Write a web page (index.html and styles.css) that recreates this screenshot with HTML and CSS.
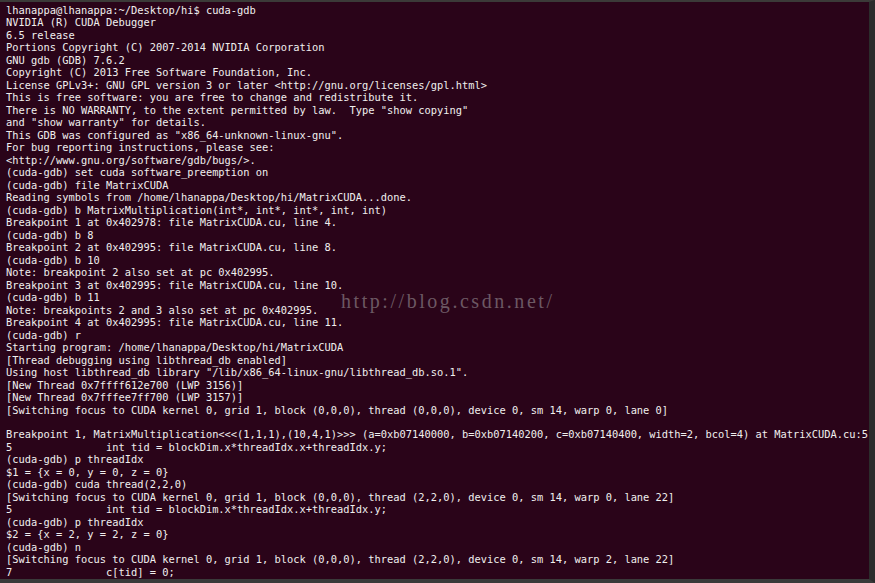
FILE: index.html
```html
<!DOCTYPE html>
<html>
<head>
<meta charset="utf-8">
<link rel="stylesheet" href="styles.css">
</head>
<body>
<div class="term">
<pre class="out">lhanappa@lhanappa:~/Desktop/hi$ cuda-gdb
NVIDIA (R) CUDA Debugger
6.5 release
Portions Copyright (C) 2007-2014 NVIDIA Corporation
GNU gdb (GDB) 7.6.2
Copyright (C) 2013 Free Software Foundation, Inc.
License GPLv3+: GNU GPL version 3 or later &lt;http://gnu.org/licenses/gpl.html&gt;
This is free software: you are free to change and redistribute it.
There is NO WARRANTY, to the extent permitted by law.  Type "show copying"
and "show warranty" for details.
This GDB was configured as "x86_64-unknown-linux-gnu".
For bug reporting instructions, please see:
&lt;http://www.gnu.org/software/gdb/bugs/&gt;.
(cuda-gdb) set cuda software_preemption on
(cuda-gdb) file MatrixCUDA
Reading symbols from /home/lhanappa/Desktop/hi/MatrixCUDA...done.
(cuda-gdb) b MatrixMultiplication(int*, int*, int*, int, int)
Breakpoint 1 at 0x402978: file MatrixCUDA.cu, line 4.
(cuda-gdb) b 8
Breakpoint 2 at 0x402995: file MatrixCUDA.cu, line 8.
(cuda-gdb) b 10
Note: breakpoint 2 also set at pc 0x402995.
Breakpoint 3 at 0x402995: file MatrixCUDA.cu, line 10.
(cuda-gdb) b 11
Note: breakpoints 2 and 3 also set at pc 0x402995.
Breakpoint 4 at 0x402995: file MatrixCUDA.cu, line 11.
(cuda-gdb) r
Starting program: /home/lhanappa/Desktop/hi/MatrixCUDA
[Thread debugging using libthread_db enabled]
Using host libthread_db library "/lib/x86_64-linux-gnu/libthread_db.so.1".
[New Thread 0x7ffff612e700 (LWP 3156)]
[New Thread 0x7fffee7ff700 (LWP 3157)]
[Switching focus to CUDA kernel 0, grid 1, block (0,0,0), thread (0,0,0), device 0, sm 14, warp 0, lane 0]

Breakpoint 1, MatrixMultiplication&lt;&lt;&lt;(1,1,1),(10,4,1)&gt;&gt;&gt; (a=0xb07140000, b=0xb07140200, c=0xb07140400, width=2, bcol=4) at MatrixCUDA.cu:5
5               int tid = blockDim.x*threadIdx.x+threadIdx.y;
(cuda-gdb) p threadIdx
$1 = {x = 0, y = 0, z = 0}
(cuda-gdb) cuda thread(2,2,0)
[Switching focus to CUDA kernel 0, grid 1, block (0,0,0), thread (2,2,0), device 0, sm 14, warp 0, lane 22]
5               int tid = blockDim.x*threadIdx.x+threadIdx.y;
(cuda-gdb) p threadIdx
$2 = {x = 2, y = 2, z = 0}
(cuda-gdb) n
[Switching focus to CUDA kernel 0, grid 1, block (0,0,0), thread (2,2,0), device 0, sm 14, warp 2, lane 22]
7               c[tid] = 0;</pre>
<div class="watermark">http://blog.csdn.net/</div>
</div>
</body>
</html>
```
FILE: styles.css
```css
html, body {
  margin: 0;
  padding: 0;
  background: #2f2f2f;
}
.term {
  position: relative;
  box-sizing: border-box;
  width: 875px;
  height: 583px;
  background: #2a0419;
  border-top: 2px solid #3b3a38;
  border-right: 6px solid #2c2c2c;
  border-bottom: 4px solid #3a3a3a;
  overflow: hidden;
}
.out {
  margin: 0;
  padding: 2px 0 0 6px;
  font-family: "DejaVu Sans Mono", "Liberation Mono", monospace;
  font-size: 10.38px;
  line-height: 12.49px;
  color: #f0efee;
  white-space: pre;
}
.watermark {
  position: absolute;
  left: 341px;
  top: 288px;
  font-family: "Liberation Serif", serif;
  font-size: 20px;
  letter-spacing: 2.55px;
  color: #6c5863;
  white-space: nowrap;
}
```
